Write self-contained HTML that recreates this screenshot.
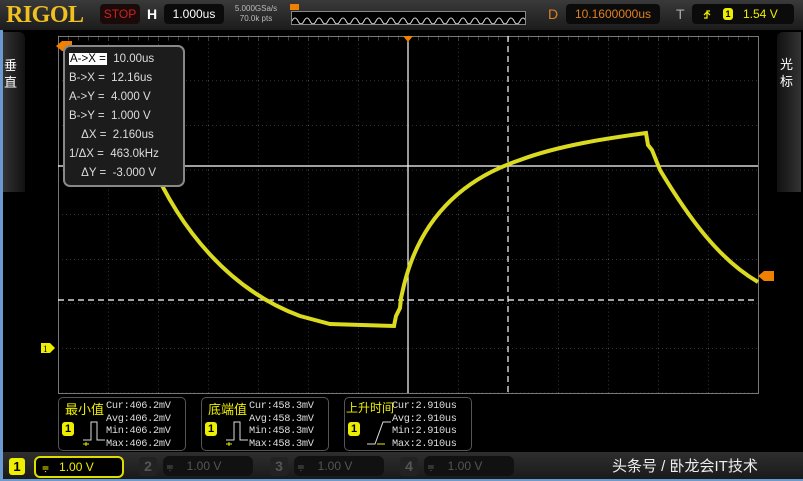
<!DOCTYPE html>
<html><head><meta charset="utf-8"><style>
body{margin:0;width:803px;height:481px;background:#000;overflow:hidden;position:relative;font-family:"Liberation Sans","Noto Sans CJK SC",sans-serif}
.a{position:absolute}
.top{left:0;top:0;width:803px;height:30px;background:linear-gradient(#3a3a3a,#1c1c1c)}
.box{position:absolute;background:#0b0b0b;border-radius:4px}
.mb{position:absolute;top:397px;width:126px;height:52px;border:1px solid #555;border-radius:5px;background:#000}
.mt{position:absolute;left:47px;top:2px;font-family:"Liberation Mono",monospace;font-size:10.3px;line-height:12.5px;color:#ddd;letter-spacing:-0.3px}
.cn{position:absolute;left:6px;top:1px;color:#ee0;font-size:13px}
.one{position:absolute;background:#ee0;color:#000;font-weight:bold;font-size:11px;text-align:center;border-radius:3px}
</style></head><body>
<div class="a top"></div>
<div class="a" style="left:6px;top:2px;font-family:'Liberation Serif',serif;font-weight:bold;font-size:24px;color:#f0c020;letter-spacing:-0.5px">RIGOL</div>
<div class="box" style="left:100px;top:4px;width:40px;height:20px;background:#1a0a0a;color:#d02020;font-size:12px;line-height:20px;text-align:center">STOP</div>
<div class="a" style="left:147px;top:6px;color:#fff;font-weight:bold;font-size:14px">H</div>
<div class="box" style="left:164px;top:4px;width:60px;height:20px;color:#fff;font-size:12px;line-height:20px;text-align:center">1.000us</div>
<div class="a" style="left:228px;top:4px;width:56px;color:#bbb;font-size:8px;line-height:10px;text-align:center">5.000GSa/s<br>70.0k pts</div>
<div class="a" style="left:290px;top:4px;width:9px;height:6px;background:#f08000"></div>
<div class="a" style="left:291px;top:11px;width:233px;height:12px;border:1px solid #888;background:#000;overflow:hidden"><svg width="233" height="12"><path d="M0 8 Q3 2 6 8 T12 8 T18 8 T24 8 T30 8 T36 8 T42 8 T48 8 T54 8 T60 8 T66 8 T72 8 T78 8 T84 8 T90 8 T96 8 T102 8 T108 8 T114 8 T120 8 T126 8 T132 8 T138 8 T144 8 T150 8 T156 8 T162 8 T168 8 T174 8 T180 8 T186 8 T192 8 T198 8 T204 8 T210 8 T216 8 T222 8 T228 8 T234 8" stroke="#ddd" fill="none" stroke-width="1"/></svg></div>
<div class="a" style="left:548px;top:6px;color:#e08020;font-size:14px">D</div>
<div class="box" style="left:566px;top:4px;width:94px;height:20px;color:#e08020;font-size:12px;line-height:20px;text-align:center">10.1600000us</div>
<div class="a" style="left:676px;top:6px;color:#aaa;font-size:14px">T</div>
<div class="box" style="left:692px;top:4px;width:102px;height:20px"></div>
<svg class="a" style="left:702px;top:8px" width="10" height="13"><path d="M2 10h3V3h3M2 7l3-3 3 3" stroke="#ee0" fill="none" stroke-width="1.3"/></svg>
<div class="one" style="left:723px;top:8px;width:10px;height:12px;line-height:12px;font-size:9px">1</div>
<div class="a" style="left:743px;top:7px;color:#ee0;font-size:12px">1.54 V</div>
<!-- side tabs -->
<div class="a" style="left:0;top:30px;width:3px;height:451px;background:#6a9ad0"></div>
<div class="a" style="left:3px;top:32px;width:22px;height:160px;background:linear-gradient(90deg,#333,#111);border-radius:0 6px 0 0"></div>
<div class="a" style="left:4px;top:57px;color:#fff;font-size:13px;line-height:17px">垂<br>直</div>
<div class="a" style="left:777px;top:32px;width:24px;height:160px;background:linear-gradient(90deg,#111,#333);border-radius:6px 0 0 0"></div>
<div class="a" style="left:780px;top:56px;color:#fff;font-size:13px;line-height:17px">光<br>标</div>
<!-- grid -->
<svg class="a" style="left:0;top:0" width="803" height="481">
<defs><pattern id="g" x="58" y="36" width="50" height="44.6" patternUnits="userSpaceOnUse"><path d="M0 0V44.6M0 0H50" stroke="#666" stroke-width="1" stroke-dasharray="1,3" fill="none"/></pattern></defs>
<rect x="58" y="36" width="700" height="357" fill="url(#g)"/>
<rect x="58.5" y="36.5" width="700" height="357" fill="none" stroke="#777"/>
<path d="M58 38H758" stroke="#777" stroke-dasharray="1,9" stroke-width="5" opacity="0.5"/>
<path d="M408 36V393" stroke="#fff" stroke-width="1.2"/>
<path d="M508 36V393" stroke="#fff" stroke-width="1.2" stroke-dasharray="6,4"/>
<path d="M58 166H758" stroke="#fff" stroke-width="1.2"/>
<path d="M58 300H758" stroke="#fff" stroke-width="1.2" stroke-dasharray="6,4"/>
<path d="M150 160 C180 230 230 290 300 316 L330 324 L394 326 L396 316 L400 308 L401 298 L404 285 C420 220 460 180 520 160 C560 145 610 138 646 133 L648 145 L652 150 L660 170 C690 220 720 260 758 282" stroke="#dada20" stroke-width="4" fill="none"/>
<path d="M403 36 h10 l-5 6z" fill="#f08000"/>
<path d="M758 276 l6-5 h10 v10 h-10z" fill="#f08000"/>
<path d="M41 343 h9 l5 5 -5 5 h-9z" fill="#ee0"/>
<text x="43" y="352" font-size="9" font-family="Liberation Serif" fill="#000">1</text>
<path d="M56 46 l6-5 h10 v10 h-10z" fill="#f08000"/>
</svg>
<!-- cursor box -->
<div class="a" style="left:63px;top:45px;width:118px;height:138px;border:2px solid #888;border-radius:7px;background:#1c1c1c"></div>
<div class="a" style="left:69px;top:50px;width:110px;font-size:11.5px;line-height:19px;color:#ddd">
<div><span style="background:#fff;color:#000;padding:0 1px">A-&gt;X =</span>&nbsp; 10.00us</div>
<div>B-&gt;X = &nbsp;12.16us</div>
<div>A-&gt;Y = &nbsp;4.000 V</div>
<div>B-&gt;Y = &nbsp;1.000 V</div>
<div>&nbsp; &nbsp; ΔX = &nbsp;2.160us</div>
<div>1/ΔX = &nbsp;463.0kHz</div>
<div>&nbsp; &nbsp; ΔY = &nbsp;-3.000 V</div>
</div>
<!-- measurement boxes -->
<div class="mb" style="left:58px"><div class="cn">最小值</div><div class="one" style="left:3px;top:24px;width:12px;height:14px;line-height:14px">1</div>
<svg class="a" style="left:20px;top:16px" width="28" height="34"><path d="M4 26h8v-18h6v18h8" stroke="#ddd" fill="none"/><path d="M4 30h6M7 28v4" stroke="#ee0"/></svg>
<div class="mt">Cur:406.2mV<br>Avg:406.2mV<br>Min:406.2mV<br>Max:406.2mV</div></div>
<div class="mb" style="left:201px"><div class="cn">底端值</div><div class="one" style="left:3px;top:24px;width:12px;height:14px;line-height:14px">1</div>
<svg class="a" style="left:20px;top:16px" width="28" height="34"><path d="M4 26h8v-18h6v18h8" stroke="#ddd" fill="none"/><path d="M4 30h6M7 28v4" stroke="#ee0"/></svg>
<div class="mt">Cur:458.3mV<br>Avg:458.3mV<br>Min:458.3mV<br>Max:458.3mV</div></div>
<div class="mb" style="left:344px"><div class="cn" style="left:1px;font-size:12px">上升时间</div><div class="one" style="left:3px;top:24px;width:12px;height:14px;line-height:14px">1</div>
<svg class="a" style="left:20px;top:16px" width="28" height="34"><path d="M2 30h8l8-22h8" stroke="#ddd" fill="none"/><path d="M12 30h8" stroke="#ee0"/></svg>
<div class="mt">Cur:2.910us<br>Avg:2.910us<br>Min:2.910us<br>Max:2.910us</div></div>
<!-- bottom bar -->
<div class="a" style="left:3px;top:452px;width:800px;height:27px;background:linear-gradient(#2e2e2e,#1a1a1a)"></div>
<div class="a" style="left:0;top:479px;width:803px;height:2px;background:#6a9ad0"></div>
<div class="one" style="left:9px;top:458px;width:16px;height:17px;line-height:17px;font-size:13px">1</div>
<div class="a" style="left:34px;top:456px;width:86px;height:18px;border:2px solid #dd0;border-radius:6px;background:#000;color:#ee0;font-size:12px;line-height:18px"><span style="margin-left:6px">⩦</span>&nbsp;&nbsp;&nbsp;1.00 V</div>
<div class="a" style="left:139px;top:457px;width:18px;height:19px;background:#222;color:#555;font-size:14px;font-weight:bold;text-align:center;line-height:19px;border-radius:3px">2</div>
<div class="a" style="left:163px;top:456px;width:90px;height:20px;background:#111;border-radius:6px;color:#555;font-size:12px;line-height:20px">&nbsp;⩦&nbsp;&nbsp;&nbsp;&nbsp;1.00 V</div>
<div class="a" style="left:270px;top:457px;width:18px;height:19px;background:#222;color:#555;font-size:14px;font-weight:bold;text-align:center;line-height:19px;border-radius:3px">3</div>
<div class="a" style="left:294px;top:456px;width:90px;height:20px;background:#111;border-radius:6px;color:#555;font-size:12px;line-height:20px">&nbsp;⩦&nbsp;&nbsp;&nbsp;&nbsp;1.00 V</div>
<div class="a" style="left:400px;top:457px;width:18px;height:19px;background:#222;color:#555;font-size:14px;font-weight:bold;text-align:center;line-height:19px;border-radius:3px">4</div>
<div class="a" style="left:424px;top:456px;width:90px;height:20px;background:#111;border-radius:6px;color:#555;font-size:12px;line-height:20px">&nbsp;⩦&nbsp;&nbsp;&nbsp;&nbsp;1.00 V</div>
<div class="a" style="left:612px;top:455px;color:#eee;font-size:15px">头条号 / 卧龙会IT技术</div>
</body></html>
